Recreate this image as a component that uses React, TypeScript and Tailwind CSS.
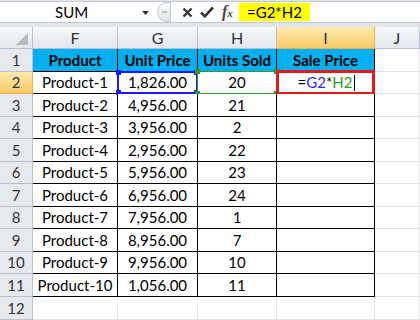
import React from 'react'

const rows = [
  ['Product-1', '1,826.00', '20'],
  ['Product-2', '4,956.00', '21'],
  ['Product-3', '3,956.00', '2'],
  ['Product-4', '2,956.00', '22'],
  ['Product-5', '5,956.00', '23'],
  ['Product-6', '6,956.00', '24'],
  ['Product-7', '7,956.00', '1'],
  ['Product-8', '8,956.00', '7'],
  ['Product-9', '9,956.00', '10'],
  ['Product-10', '1,056.00', '11'],
]

const colHead = 'flex items-center justify-center border-r border-b border-[#b5c1cf] bg-gradient-to-b from-[#f6f8fa] to-[#e2e7ed] text-[16px] text-[#333]'
const colHeadSel = 'flex items-center justify-center border-r border-b border-[#e9b04c] bg-gradient-to-b from-[#fde9ae] to-[#f8ca66] text-[16px] text-[#333]'
const rowHead = 'flex items-center justify-center border-r border-b border-[#b9c2cc] bg-[#e6e9ee] text-[15px] text-[#333]'
const rowHeadSel = 'flex items-center justify-center border-r border-b border-[#e9b04c] bg-gradient-to-b from-[#fde9ae] to-[#f8ca66] text-[15px] text-[#333]'
const cell = 'flex items-center justify-center border-r border-b border-black text-[15px] text-black bg-white'
const head = 'flex items-center justify-center border-r border-b border-black text-[15px] font-bold text-black bg-[#00b0f0]'
const empty = 'border-r border-b border-[#e4e4e4] bg-white'

function Corners({ color }: { color: string }) {
  return (
    <>
      <span className={`absolute -left-[3px] -top-[3px] w-[5px] h-[5px] ${color}`} />
      <span className={`absolute -right-[3px] -top-[3px] w-[5px] h-[5px] ${color}`} />
      <span className={`absolute -left-[3px] -bottom-[3px] w-[5px] h-[5px] ${color}`} />
      <span className={`absolute -right-[3px] -bottom-[3px] w-[5px] h-[5px] ${color}`} />
    </>
  )
}

export default function App() {
  return (
    <div className="w-[420px] h-[320px] overflow-hidden bg-white font-['Lato',sans-serif]">
      {/* formula bar */}
      <div className="h-[27px] bg-[#e1e6ec] pt-[1px]">
        <div className="h-[22px] flex bg-white border-y border-[#c3c9d0]">
          <div className="w-[156px] relative flex items-center">
            <span className="ml-[55px] text-[15px] text-black">SUM</span>
            <svg className="absolute right-[7px] top-[9px]" width="7" height="4" viewBox="0 0 7 4">
              <path d="M0 0h7L3.5 4z" fill="#333" />
            </svg>
          </div>
          <div className="w-[83px] flex items-center">
            <div className="w-[14px] h-full rounded-l-full border border-[#c3c9d0] bg-gradient-to-b from-[#fbfcfd] to-[#dfe4ea] flex items-center justify-center ml-[1px]">
              <span className="w-[5px] h-[2px] bg-[#b8bfc7]" />
            </div>
            <svg className="ml-[11px]" width="11" height="11" viewBox="0 0 11 11">
              <path d="M1.5 1.5l8 8M9.5 1.5l-8 8" stroke="#333" strokeWidth="2.4" />
            </svg>
            <svg className="ml-[7px]" width="14" height="12" viewBox="0 0 14 12">
              <path d="M1 6.5l3.8 3.8L13 1.5" stroke="#333" strokeWidth="2.6" fill="none" />
            </svg>
            <span className="ml-[8px] text-[16px] italic font-bold text-[#444] font-['Liberation_Serif',serif] leading-none">
              f<span className="text-[11px]">x</span>
            </span>
          </div>
          <div className="flex-1 flex items-stretch py-[1px]">
            <div className="bg-[#ffff00] px-[8px] flex items-center text-[15px] text-black">=G2*H2</div>
          </div>
        </div>
      </div>

      {/* sheet grid */}
      <div className="grid grid-cols-[33px_85px_80px_79px_98px_45px] grid-rows-[22px_23px_22px_23px_22px_23px_22px_23px_22px_23px_22px_23px_23px]">
        <div className="relative border-r border-b border-[#b5c1cf] bg-gradient-to-b from-[#f6f8fa] to-[#e2e7ed]">
          <svg className="absolute right-[4px] bottom-[3px]" width="12" height="12" viewBox="0 0 12 12">
            <path d="M12 0v12H0z" fill="#b4bcc6" />
          </svg>
        </div>
        <div className={colHead}>F</div>
        <div className={colHead}>G</div>
        <div className={colHead}>H</div>
        <div className={colHeadSel}>I</div>
        <div className={colHead}>J</div>

        <div className={rowHead}>1</div>
        <div className={head}>Product</div>
        <div className={head}>Unit Price</div>
        <div className={head}>Units Sold</div>
        <div className={head}>Sale Price</div>
        <div className={empty} />

        {rows.map((r, i) => (
          <React.Fragment key={r[0]}>
            <div className={i === 0 ? rowHeadSel : rowHead}>{i + 2}</div>
            <div className={cell}>{r[0]}</div>
            <div className={`${cell} relative`}>
              {r[1]}
              {i === 0 && (
                <span className="absolute -left-[1px] -top-[1px] -right-[1px] -bottom-[1px] border-2 border-[#1a1aff]">
                  <Corners color="bg-[#1a1aff]" />
                </span>
              )}
            </div>
            <div className={`${cell} relative`}>
              {r[2]}
              {i === 0 && (
                <span className="absolute -left-[1px] -top-[1px] -right-[1px] -bottom-[1px] border border-[#2f9a2f]">
                  <Corners color="bg-[#2f9a2f]" />
                </span>
              )}
            </div>
            <div className={`${cell} relative`}>
              {i === 0 && (
                <>
                  <span className="ml-[2px]">
                    =<span className="text-[#2b2bff]">G2</span>*<span className="text-[#2f9a2f]">H2</span>
                  </span>
                  <span className="ml-[2px] w-[1px] h-[16px] bg-black" />
                  <span className="absolute -left-[1px] -top-[2px] -right-[1px] -bottom-[2px] border-[3px] border-[#e01b1b]" />
                </>
              )}
            </div>
            <div className={empty} />
          </React.Fragment>
        ))}

        <div className={rowHead}>12</div>
        <div className={empty} />
        <div className={empty} />
        <div className={empty} />
        <div className={empty} />
        <div className={empty} />
      </div>
    </div>
  )
}
